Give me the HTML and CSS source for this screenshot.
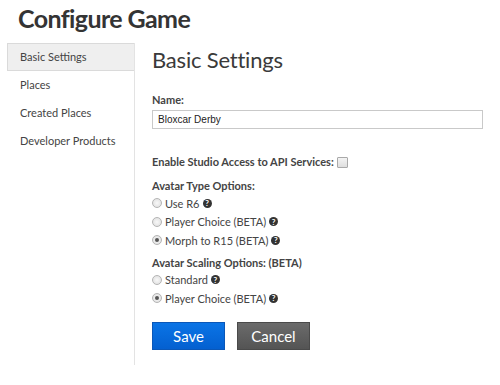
FILE: index.html
```html
<!DOCTYPE html>
<html lang="en">
<head>
  <meta charset="UTF-8">
  <title>Configure Game</title>
  <link rel="stylesheet" href="styles.css">
</head>
<body>
  <h1 class="page-title">Configure Game</h1>
  <div class="layout">
    <ul class="sidebar">
      <li class="side-item active">Basic Settings</li>
      <li class="side-item">Places</li>
      <li class="side-item">Created Places</li>
      <li class="side-item">Developer Products</li>
    </ul>
    <div class="content">
      <h2 class="section-title">Basic Settings</h2>

      <label class="field-label" for="name">Name:</label>
      <input class="text-input" id="name" type="text" value="Bloxcar Derby">

      <div class="field-label api-row">
        Enable Studio Access to API Services:
        <span class="checkbox"></span>
      </div>

      <div class="field-label">Avatar Type Options:</div>
      <div class="radio-group">
        <div class="radio-row"><span class="radio"></span>Use R6 <span class="help">?</span></div>
        <div class="radio-row"><span class="radio"></span>Player Choice (BETA) <span class="help">?</span></div>
        <div class="radio-row"><span class="radio checked"></span>Morph to R15 (BETA) <span class="help">?</span></div>
      </div>

      <div class="field-label group-label">Avatar Scaling Options: (BETA)</div>
      <div class="radio-group">
        <div class="radio-row"><span class="radio"></span>Standard <span class="help">?</span></div>
        <div class="radio-row"><span class="radio checked"></span>Player Choice (BETA) <span class="help">?</span></div>
      </div>

      <div class="actions">
        <button class="btn btn-save">Save</button>
        <button class="btn btn-cancel">Cancel</button>
      </div>
    </div>
  </div>
</body>
</html>
```
FILE: styles.css
```css
body {
  margin: 0;
  padding: 0;
  font-family: Lato, "Open Sans", sans-serif;
  color: #333;
  background: #fff;
}
.page-title {
  margin: 0;
  padding: 3px 0 0 18px;
  height: 40px;
  font-size: 25px;
  font-weight: 700;
  letter-spacing: -0.6px;
  color: #343434;
}
.layout {
  display: flex;
  padding-left: 7px;
}
.sidebar {
  list-style: none;
  margin: 0;
  padding: 0;
  width: 127px;
  height: 322px;
  border-right: 1px solid #e3e3e3;
}
.side-item {
  height: 28px;
  line-height: 28px;
  padding-left: 13px;
  font-size: 11px;
  color: #444;
}
.side-item.active {
  background: #efefef;
  border: 1px solid #dadada;
  border-right: none;
  height: 26px;
  line-height: 26px;
  padding-left: 12px;
}
.content {
  padding-left: 17px;
  width: 331px;
}
.section-title {
  margin: 0;
  padding-top: 3px;
  height: 45px;
  font-size: 22px;
  font-weight: 400;
  letter-spacing: -0.2px;
  color: #3a3a3a;
}
.field-label {
  display: block;
  font-size: 11px;
  font-weight: 700;
  color: #444;
  height: 18px;
  line-height: 18px;
}
.text-input {
  display: block;
  box-sizing: border-box;
  width: 331px;
  height: 19px;
  margin: 1px 0 0 0;
  padding: 0 5px;
  border: 1px solid #c9c9c9;
  font-family: "Liberation Sans", Arial, sans-serif;
  font-size: 10px;
  color: #222;
}
.api-row {
  margin-top: 24px;
  display: flex;
  align-items: center;
  gap: 3px;
}
.api-row + .field-label {
  margin-top: 6px;
}
.checkbox {
  display: inline-block;
  width: 9px;
  height: 9px;
  border: 1px solid #a9a9a9;
  border-radius: 1px;
  background: linear-gradient(#f4f4f4, #dedede);
}
.radio-group {
  margin-top: -1px;
}
.radio-row {
  display: flex;
  align-items: center;
  height: 18.5px;
  font-size: 11px;
  color: #444;
}
.radio {
  box-sizing: border-box;
  width: 10px;
  height: 10px;
  border-radius: 50%;
  border: 1px solid #b4b4b4;
  background: radial-gradient(#f8f8f8, #dcdcdc);
  margin: 0 3px 0 0;
  position: relative;
}
.radio.checked::after {
  content: "";
  position: absolute;
  left: 2px;
  top: 2px;
  width: 4px;
  height: 4px;
  border-radius: 50%;
  background: #555;
}
.help {
  display: inline-flex;
  align-items: center;
  justify-content: center;
  width: 9px;
  height: 9px;
  margin-left: 3px;
  border-radius: 50%;
  background: #333;
  color: #fff;
  font-size: 8px;
  font-weight: 700;
  line-height: 1;
}
.group-label {
  margin-top: 4px;
}
.actions {
  display: flex;
  gap: 12px;
  margin-top: 14px;
}
.btn {
  width: 73px;
  height: 28px;
  border: 1px solid;
  font-family: Lato, "Open Sans", sans-serif;
  font-size: 15px;
  color: #fff;
  padding: 0;
}
.btn-save {
  background: linear-gradient(#0a74e6, #0460d0);
  border-color: #0a57b8;
}
.btn-cancel {
  background: linear-gradient(#6b6b6b, #545454);
  border-color: #4a4a4a;
}
```
